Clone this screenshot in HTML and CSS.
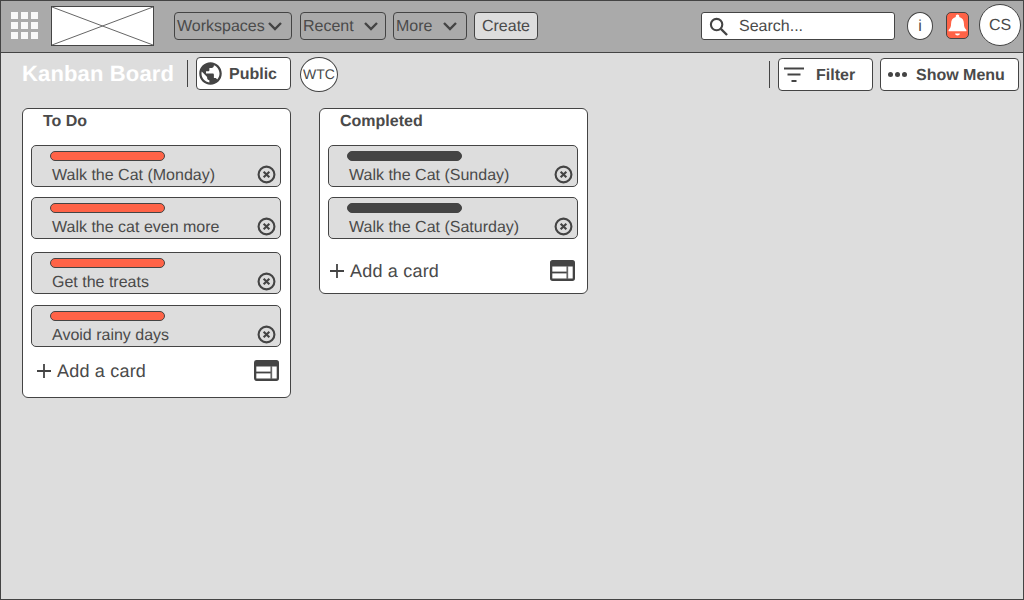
FILE: index.html
```html
<!DOCTYPE html>
<html lang="en">
<head>
<meta charset="utf-8">
<title>Kanban Board</title>
<link rel="stylesheet" href="styles.css">
</head>
<body>
<div class="frame">
  <header class="topbar">
    <div class="apps"><i></i><i></i><i></i><i></i><i></i><i></i><i></i><i></i><i></i></div>
    <svg class="logo" viewBox="0 0 103 40" preserveAspectRatio="none"><rect x="0.5" y="0.5" width="102" height="39" fill="#fff" stroke="#444"/><path d="M1 1 102 39M102 1 1 39" stroke="#666" stroke-width="1" fill="none"/></svg>
    <nav class="nav">
      <button class="menu m-work">Workspaces<svg class="chev" viewBox="0 0 16 10"><path d="M2 2l6 6 6-6" fill="none" stroke="#444" stroke-width="2.4"/></svg></button>
      <button class="menu m-recent">Recent<svg class="chev" viewBox="0 0 16 10"><path d="M2 2l6 6 6-6" fill="none" stroke="#444" stroke-width="2.4"/></svg></button>
      <button class="menu m-more">More<svg class="chev" viewBox="0 0 16 10"><path d="M2 2l6 6 6-6" fill="none" stroke="#444" stroke-width="2.4"/></svg></button>
      <button class="create">Create</button>
    </nav>
    <div class="search">
      <svg class="search-icon" viewBox="0 0 20 20"><circle cx="8" cy="8" r="6" fill="none" stroke="#444" stroke-width="2.2"/><path d="M12.5 12.5l6.5 6.5" stroke="#444" stroke-width="2.4"/></svg>
      <span>Search...</span>
    </div>
    <div class="info">i</div>
    <div class="bell">
      <svg viewBox="0 0 24 28"><path d="M12 1.500c1.200 0 2 .9 2 2v.8c3.600 1 5.300 3.800 5.300 7.200 0 4.200 1.100 6 2.900 7.700v1.500H1.800v-1.500C3.600 17.500 4.700 15.700 4.700 11.500c0-3.400 1.700-6.200 5.300-7.200v-.8c0-1.100.8-2 2-2z" fill="#fff"/><path d="M9.300 23h5.400c0 1.300-1.200 2.300-2.700 2.300s-2.700-1-2.700-2.300z" fill="#fff"/></svg>
    </div>
    <div class="avatar">CS</div>
  </header>

  <div class="subbar">
    <h1 class="title">Kanban Board</h1>
    <span class="sep"></span>
    <button class="pill public">
      <svg class="globe" viewBox="0 0 24 24"><path fill="#444" d="M12 2C6.480 2 2 6.480 2 12s4.480 10 10 10 10-4.480 10-10S17.520 2 12 2zm-1 17.930c-3.950-.49-7-3.850-7-7.930 0-.62.08-1.210.21-1.790L9 15v1c0 1.100.9 2 2 2v1.930zm6.900-2.540c-.26-.81-1-1.390-1.900-1.390h-1v-3c0-.55-.45-1-1-1H8v-2h2c.55 0 1-.45 1-1V7h2c1.100 0 2-.9 2-2v-.41c2.930 1.190 5 4.060 5 7.410 0 2.080-.8 3.970-2.100 5.390z"/></svg>
      <span class="pill-text">Public</span>
    </button>
    <div class="wtc">WTC</div>
    <span class="sep sep-right"></span>
    <button class="pill filter">
      <svg class="filter-icon" viewBox="0 0 20 16"><path d="M0 1.500h20M3.500 7.500h13M7.500 14h5" stroke="#444" stroke-width="2" fill="none"/></svg>
      <span class="pill-text">Filter</span>
    </button>
    <button class="pill show-menu">
      <span class="dots"><i></i><i></i><i></i></span>
      <span class="pill-text">Show Menu</span>
    </button>
  </div>

  <main class="board">
    <section class="list">
      <h2 class="list-title">To Do</h2>
      <div class="cards">
        <article class="card">
          <div class="card-body"><div class="tag tag-red"></div><p class="card-text">Walk the Cat (Monday)</p></div>
          <svg class="close" viewBox="0 0 18 18"><circle cx="9" cy="9" r="7.500" fill="none" stroke="#444" stroke-width="2"/><path d="M6.300 6.300l5.400 5.400M11.700 6.300l-5.400 5.400" stroke="#444" stroke-width="2"/></svg>
        </article>
        <article class="card">
          <div class="card-body"><div class="tag tag-red"></div><p class="card-text">Walk the cat even more</p></div>
          <svg class="close" viewBox="0 0 18 18"><circle cx="9" cy="9" r="7.500" fill="none" stroke="#444" stroke-width="2"/><path d="M6.300 6.300l5.400 5.400M11.700 6.300l-5.400 5.400" stroke="#444" stroke-width="2"/></svg>
        </article>
        <article class="card gap-a">
          <div class="card-body"><div class="tag tag-red"></div><p class="card-text">Get the treats</p></div>
          <svg class="close" viewBox="0 0 18 18"><circle cx="9" cy="9" r="7.500" fill="none" stroke="#444" stroke-width="2"/><path d="M6.300 6.300l5.400 5.400M11.700 6.300l-5.400 5.400" stroke="#444" stroke-width="2"/></svg>
        </article>
        <article class="card gap-b">
          <div class="card-body"><div class="tag tag-red"></div><p class="card-text">Avoid rainy days</p></div>
          <svg class="close" viewBox="0 0 18 18"><circle cx="9" cy="9" r="7.500" fill="none" stroke="#444" stroke-width="2"/><path d="M6.300 6.300l5.400 5.400M11.700 6.300l-5.400 5.400" stroke="#444" stroke-width="2"/></svg>
        </article>
      </div>
      <div class="add add-first">
        <svg class="plus" viewBox="0 0 14 14"><path d="M7 0v14M0 7h14" stroke="#444" stroke-width="1.800"/></svg>
        <span class="add-text">Add a card</span>
        <svg class="template" viewBox="0 0 26 21" preserveAspectRatio="none"><rect x="1.200" y="1.200" width="23.600" height="18.600" rx="1.500" fill="#fff" stroke="#444" stroke-width="2.400"/><path d="M1 1h24v5.500H1z" fill="#444"/><path d="M2 12.500h16" stroke="#444" stroke-width="1.800"/><path d="M18 6v13" stroke="#666" stroke-width="1.800"/></svg>
      </div>
    </section>

    <section class="list">
      <h2 class="list-title">Completed</h2>
      <div class="cards">
        <article class="card">
          <div class="card-body"><div class="tag tag-dark"></div><p class="card-text">Walk the Cat (Sunday)</p></div>
          <svg class="close" viewBox="0 0 18 18"><circle cx="9" cy="9" r="7.500" fill="none" stroke="#444" stroke-width="2"/><path d="M6.300 6.300l5.400 5.400M11.700 6.300l-5.400 5.400" stroke="#444" stroke-width="2"/></svg>
        </article>
        <article class="card">
          <div class="card-body"><div class="tag tag-dark"></div><p class="card-text">Walk the Cat (Saturday)</p></div>
          <svg class="close" viewBox="0 0 18 18"><circle cx="9" cy="9" r="7.500" fill="none" stroke="#444" stroke-width="2"/><path d="M6.300 6.300l5.400 5.400M11.700 6.300l-5.400 5.400" stroke="#444" stroke-width="2"/></svg>
        </article>
      </div>
      <div class="add add-second">
        <svg class="plus" viewBox="0 0 14 14"><path d="M7 0v14M0 7h14" stroke="#444" stroke-width="1.800"/></svg>
        <span class="add-text">Add a card</span>
        <svg class="template" viewBox="0 0 26 21" preserveAspectRatio="none"><rect x="1.200" y="1.200" width="23.600" height="18.600" rx="1.500" fill="#fff" stroke="#444" stroke-width="2.400"/><path d="M1 1h24v5.500H1z" fill="#444"/><path d="M2 12.500h16" stroke="#444" stroke-width="1.800"/><path d="M18 6v13" stroke="#666" stroke-width="1.800"/></svg>
      </div>
    </section>
  </main>
</div>
</body>
</html>
```

FILE: styles.css
```css
* { box-sizing: border-box; }
html, body { margin: 0; padding: 0; }
body {
  width: 1024px;
  height: 600px;
  overflow: hidden;
  font-family: "Liberation Sans", Arial, sans-serif;
  color: #4a4a4a;
  text-rendering: geometricPrecision;
}
button { font: inherit; color: inherit; margin: 0; text-rendering: inherit; }
h1, h2, p { margin: 0; }

.frame {
  width: 1024px;
  height: 600px;
  border: 1px solid #444;
  background: #ddd;
}

/* top bar */
.topbar {
  height: 52px;
  background: #aaa;
  border-bottom: 1px solid #444;
  display: flex;
  align-items: center;
  padding: 0 0 1px 10px;
}
.apps {
  width: 27px;
  margin-bottom: 1px;
  display: grid;
  grid-template-columns: repeat(3, 7px);
  grid-auto-rows: 7px;
  gap: 3px;
}
.apps i { background: #fff; opacity: .92; }
.logo { width: 103px; height: 40px; margin-left: 13px; display: block; flex: none; }
.nav { display: flex; align-items: center; margin-left: 20px; }
.menu, .create {
  height: 28px;
  border: 1px solid #444;
  border-radius: 4px;
  font-size: 16px;
  line-height: 24px;
  padding: 2px 0 0;
  text-align: left;
  display: flex;
  align-items: center;
}
.menu { background: #aaa; padding-left: 2px; }
.m-work { width: 118px; }
.m-recent { width: 86px; margin-left: 8px; }
.m-more { width: 74px; margin-left: 7px; }
.create { width: 64px; margin-left: 7px; background: #ddd; justify-content: center; }
.chev { width: 16px; height: 10px; margin-bottom: 2px; display: block; flex: none; }
.m-work .chev { margin-left: 2px; }
.m-recent .chev { margin-left: 9px; }
.m-more .chev { margin-left: 10px; }
.search {
  width: 194px;
  height: 28px;
  margin-left: 163px;
  background: #fff;
  border: 1px solid #444;
  border-radius: 3px;
  display: flex;
  align-items: center;
  padding-left: 7px;
  font-size: 16px;
}
.search-icon { width: 19px; height: 19px; display: block; flex: none; }
.search span { margin-left: 11px; padding-top: 2px; }
.info {
  width: 26px;
  height: 28px;
  margin-left: 12px;
  border-radius: 50%;
  background: #fff;
  border: 1px solid #444;
  text-align: center;
  font-size: 16px;
  line-height: 27px;
}
.bell {
  width: 23px;
  height: 27px;
  margin-left: 13px;
  margin-bottom: 1px;
  background: #ff6347;
  border: 1px solid #444;
  border-radius: 5px;
  display: flex;
  align-items: center;
  justify-content: center;
}
.bell svg { width: 21px; height: 25px; display: block; }
.avatar {
  width: 42px;
  height: 42px;
  margin-left: 10px;
  margin-bottom: 2px;
  border-radius: 50%;
  background: #fff;
  border: 1px solid #444;
  text-align: center;
  font-size: 16px;
  line-height: 42px;
}

/* sub bar */
.subbar {
  height: 43px;
  display: flex;
  align-items: flex-start;
  padding-left: 21px;
}
.title {
  width: 165px;
  margin-top: 8px;
  font-size: 22px;
  line-height: 26px;
  font-weight: 700;
  color: #fff;
  white-space: nowrap;
  letter-spacing: .15px;
}
.sep { width: 1px; height: 27px; margin-top: 7px; background: #444; flex: none; }
.pill {
  height: 33px;
  background: #fff;
  border: 1px solid #444;
  border-radius: 4px;
  font-size: 16px;
  font-weight: 700;
  padding: 0;
  display: flex;
  align-items: center;
}
.pill-text { padding-top: 2px; }
.public { width: 95px; margin-left: 8px; margin-top: 4px; padding-left: 0; }
.globe { width: 27px; height: 27px; display: block; flex: none; }
.public .pill-text { margin-left: 5px; }
.wtc {
  width: 38px;
  height: 35px;
  margin-left: 9px;
  margin-top: 4px;
  background: #fff;
  border: 1px solid #444;
  border-radius: 50%;
  text-align: center;
  font-size: 14px;
  line-height: 33px;
}
.sep-right { margin-left: 431px; margin-top: 8px; }
.filter { width: 95px; margin-left: 8px; margin-top: 5px; padding-left: 5px; }
.filter-icon { width: 20px; height: 16px; display: block; flex: none; }
.filter .pill-text { margin-left: 12px; }
.show-menu { width: 139px; margin-left: 7px; margin-top: 5px; padding-left: 7px; }
.dots { display: flex; gap: 2px; }
.dots i { width: 5px; height: 5px; background: #444; border-radius: 50%; display: block; }
.show-menu .pill-text { margin-left: 9px; }

/* board */
.board {
  display: flex;
  align-items: flex-start;
  gap: 28px;
  padding: 12px 0 0 21px;
}
.list {
  width: 269px;
  background: #fff;
  border: 1px solid #444;
  border-radius: 6px;
  padding: 0 9px 0 8px;
}
.list-title {
  font-size: 16px;
  line-height: 18px;
  font-weight: 700;
  padding: 4px 0 0 12px;
}
.cards { margin-top: 14px; }
.card {
  width: 250px;
  height: 42px;
  background: #ddd;
  border: 1px solid #444;
  border-radius: 5px;
  display: flex;
  justify-content: space-between;
  align-items: flex-end;
  padding: 0 4px 2px 18px;
}
.card + .card { margin-top: 10px; }
.card.gap-a { margin-top: 13px; }
.card.gap-b { margin-top: 11px; }
.tag { width: 115px; height: 10px; border: 1px solid #444; border-radius: 5px; }
.tag-red { background: #ff6347; }
.tag-dark { background: #444; }
.card-text { font-size: 16px; line-height: 18px; margin: 6px 0 0 2px; white-space: nowrap; }
.card-body { align-self: flex-start; padding-top: 5px; }
.close { width: 19px; height: 19px; display: block; flex: none; }
.add {
  display: flex;
  align-items: center;
  height: 26px;
}
.add-first { margin-top: 11px; margin-bottom: 13px; padding: 0 2px 0 6px; }
.add-second { margin-top: 19px; margin-bottom: 9px; padding: 0 3px 0 2px; }
.plus { width: 14px; height: 14px; display: block; flex: none; }
.add-text { margin-left: 6px; font-size: 18px; letter-spacing: .2px; }
.template { width: 25px; height: 21px; margin: 0 0 2px auto; display: block; flex: none; }
```
